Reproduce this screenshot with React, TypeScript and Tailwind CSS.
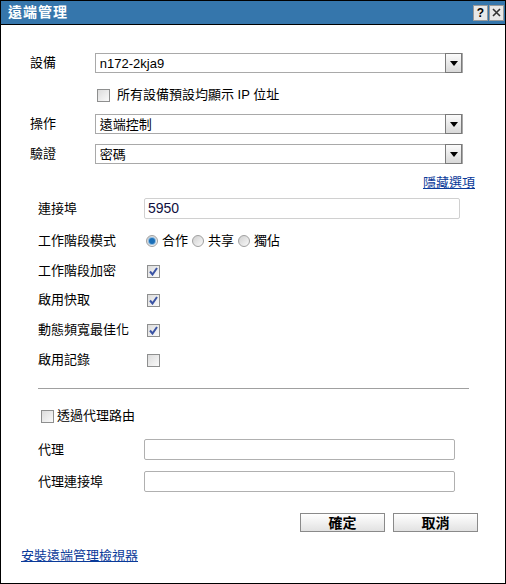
const font = { fontFamily: '"Liberation Sans", Arial, "Noto Sans CJK TC", sans-serif' };

function Select({ value }: { value: string }) {
  return (
    <div className="flex h-[20px] w-[369px] items-center border border-[#a9a9a9] bg-white">
      <span className="flex-1 pl-[4px] text-[13px] leading-none text-black">{value}</span>
      <div className="flex h-[20px] w-[17px] items-center justify-center border border-[#7a7a7a] bg-gradient-to-b from-[#fbfbfb] to-[#d8d8d8]">
        <svg width="8" height="5" viewBox="0 0 8 5">
          <path d="M0 0 H8 L4 5 Z" fill="#000" />
        </svg>
      </div>
    </div>
  );
}

function Check({ on = false }: { on?: boolean }) {
  return (
    <div className="flex h-[13px] w-[13px] shrink-0 items-center justify-center border border-[#8e8f8f] bg-gradient-to-br from-[#dcdcdc] to-[#fafafa]">
      {on && (
        <svg width="9" height="9" viewBox="0 0 9 9">
          <path d="M1 4.5 L3.5 7.5 L8 1" stroke="#3a53a4" strokeWidth="2" fill="none" />
        </svg>
      )}
    </div>
  );
}

function Radio({ on = false }: { on?: boolean }) {
  return (
    <div className="flex h-[12px] w-[12px] items-center justify-center rounded-full border border-[#a0a0a0] bg-gradient-to-br from-[#d0d0d0] to-[#fafafa]">
      {on && <div className="h-[6px] w-[6px] rounded-full bg-[#1b6fb8] shadow-[0_0_0_1px_#8fbce0]" />}
    </div>
  );
}

function Row({ label, children, className = "" }: { label: string; children: React.ReactNode; className?: string }) {
  return (
    <div className={`flex h-[20px] items-center ${className}`}>
      <span className="w-[106px] shrink-0 text-[13px] text-black">{label}</span>
      {children}
    </div>
  );
}

export default function App() {
  return (
    <div style={font} className="flex h-[584px] w-[506px] flex-col border border-black bg-white">
      <div className="flex h-[24px] items-center justify-between border-b border-black bg-[#3576ac] pl-[7px] pr-[1px]">
        <span className="text-[14px] font-bold tracking-[1px] text-white">遠端管理</span>
        <div className="flex gap-[1px]">
          <div className="flex h-[16px] w-[15px] items-center justify-center border border-[#999] bg-[#e8e8e8] text-[12px] font-bold leading-none text-black">?</div>
          <div className="flex h-[16px] w-[15px] items-center justify-center border border-[#999] bg-[#e8e8e8]">
            <svg width="9" height="9" viewBox="0 0 9 9">
              <path d="M1 1 L8 8 M8 1 L1 8" stroke="#333" strokeWidth="1.6" />
            </svg>
          </div>
        </div>
      </div>

      <div className="flex flex-col pl-[29px] pr-[42px]">
        <div className="mt-[28px] flex h-[20px] items-center">
          <span className="w-[65px] text-[13px] text-black">設備</span>
          <Select value="n172-2kja9" />
        </div>
        <div className="mt-[12px] flex h-[20px] items-center pl-[67px]">
          <Check />
          <span className="ml-[7px] text-[13px] text-black">所有設備預設均顯示 IP 位址</span>
        </div>
        <div className="mt-[9px] flex h-[20px] items-center">
          <span className="w-[65px] text-[13px] text-black">操作</span>
          <Select value="遠端控制" />
        </div>
        <div className="mt-[10px] flex h-[20px] items-center">
          <span className="w-[65px] text-[13px] text-black">驗證</span>
          <Select value="密碼" />
        </div>
        <div className="mt-[11px] flex h-[15px] justify-end">
          <a className="mr-[-12px] text-[13px] leading-[15px] text-[#0a3a99] underline">隱藏選項</a>
        </div>
      </div>

      <div className="flex flex-col pl-[37px] pr-[37px]">
        <Row label="連接埠" className="mt-[8px] h-[21px]">
          <div className="flex h-[21px] w-[316px] items-center rounded-[2px] border border-[#d0d0d0] pl-[3px] text-[14px] text-[#101040]">5950</div>
        </Row>
        <Row label="工作階段模式" className="mt-[12px]">
          <div className="flex items-center gap-[4px] pl-[2px] text-[13px] text-black">
            <Radio on />
            <span>合作</span>
            <Radio />
            <span>共享</span>
            <Radio />
            <span>獨佔</span>
          </div>
        </Row>
        <Row label="工作階段加密" className="mt-[10px]">
          <div className="pl-[3px]"><Check on /></div>
        </Row>
        <Row label="啟用快取" className="mt-[9px]">
          <div className="pl-[3px]"><Check on /></div>
        </Row>
        <Row label="動態頻寬最佳化" className="mt-[10px]">
          <div className="pl-[3px]"><Check on /></div>
        </Row>
        <Row label="啟用記錄" className="mt-[10px]">
          <div className="pl-[3px]"><Check /></div>
        </Row>
        <div className="mt-[18px] h-[2px] w-[431px] border-t border-[#a0a0a0] border-b-white" />
        <div className="mt-[16px] flex h-[20px] items-center pl-[3px]">
          <Check />
          <span className="ml-[3px] text-[13px] text-black">透過代理路由</span>
        </div>
        <Row label="代理" className="mt-[13px] h-[21px]">
          <div className="h-[21px] w-[311px] rounded-[2px] border border-[#b0b0b0]" />
        </Row>
        <Row label="代理連接埠" className="mt-[11px] h-[21px]">
          <div className="h-[21px] w-[311px] rounded-[2px] border border-[#b0b0b0]" />
        </Row>
        <div className="mt-[21px] flex justify-end gap-[8px]">
          <button className="h-[19px] w-[85px] border border-[#8a8a8a] bg-gradient-to-b from-white to-[#e2e2e2] text-[14px] font-bold leading-none text-black">確定</button>
          <button className="mr-[-10px] h-[19px] w-[85px] border border-[#8a8a8a] bg-gradient-to-b from-white to-[#e2e2e2] text-[14px] font-bold leading-none text-black">取消</button>
        </div>
      </div>

      <div className="mt-[11px] pl-[20px]">
        <a className="text-[13px] text-[#0a3a99] underline">安裝遠端管理檢視器</a>
      </div>
    </div>
  );
}
